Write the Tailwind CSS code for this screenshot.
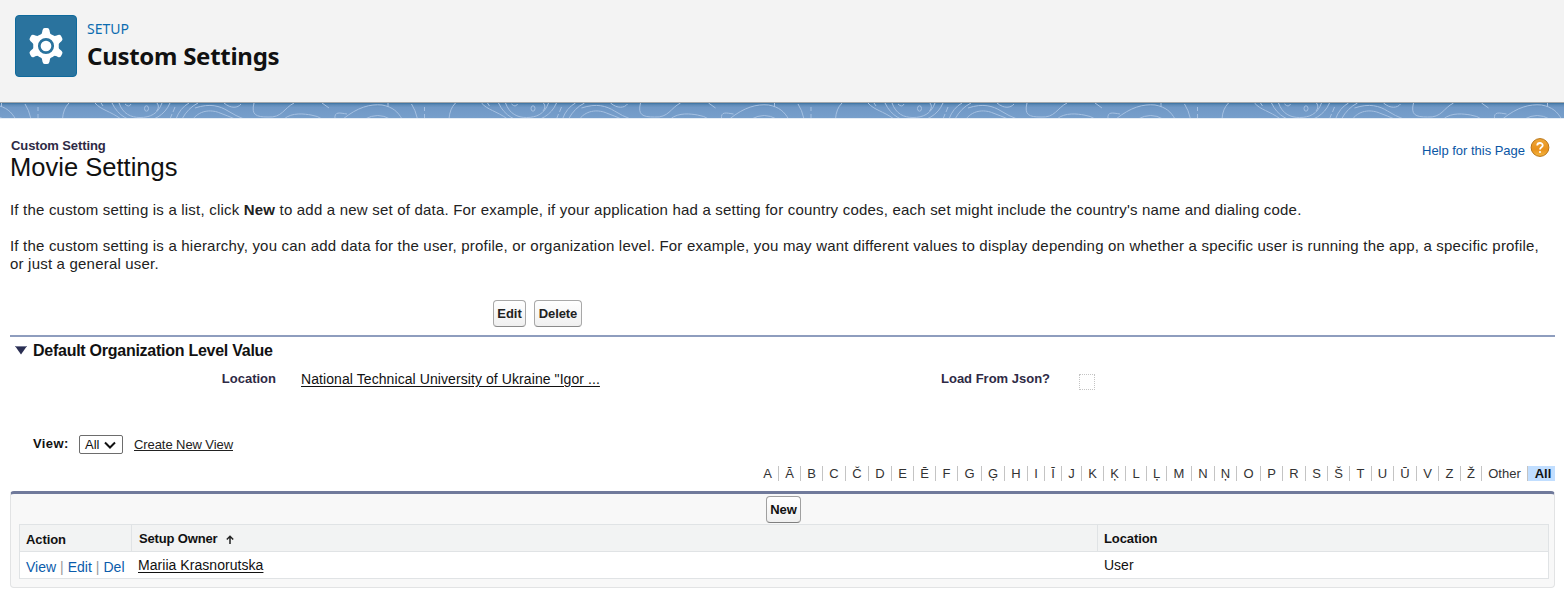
<!DOCTYPE html>
<html lang="en">
<head>
<meta charset="utf-8">
<title>Custom Settings</title>
<script src="https://cdn.jsdelivr.net/npm/@tailwindcss/browser@4"></script>
</head>
<body class="h-[594px] overflow-hidden bg-white font-['Liberation_Sans',Arial,sans-serif] text-[#111]">
<header class="flex h-[103px] items-start gap-[10px] border-b border-[#a3a7ab] bg-[#f3f3f3] pt-[15px] pl-[15px] font-['Noto_Sans',sans-serif]">
  <div class="flex size-[62px] items-center justify-center rounded-[4px] border border-[#0f6a9c] bg-[#2a739e]">
    <svg class="size-[38px]" viewBox="-19 -19 38 38"><g fill="#fff"><circle r="12.800"/><path id="tooth" d="M-5.400-10.500C-4-12.500-3.900-13.500-3.500-15.800Q-3-18 -1.300-18H1.300Q3-18 3.500-15.800C3.900-13.500 4-12.500 5.400-10.500Z"/><use href="#tooth" transform="rotate(60)"/><use href="#tooth" transform="rotate(120)"/><use href="#tooth" transform="rotate(180)"/><use href="#tooth" transform="rotate(240)"/><use href="#tooth" transform="rotate(300)"/></g><circle r="6.700" fill="none" stroke="#2a739e" stroke-width="2.700"/></svg>
  </div>
  <div class="pt-[4px]">
    <div class="text-[14px] leading-[20px] text-[#0b6cb0]">SETUP</div>
    <h1 class="text-[24px] leading-[34px] font-bold tracking-[-0.28px] text-[#111]">Custom Settings</h1>
  </div>
</header>
<svg class="block h-[16px] w-full" viewBox="0 0 1564 16">
  <defs>
    <linearGradient id="shade" x1="0" y1="0" x2="0" y2="1"><stop offset="0" stop-color="#39719f"/><stop offset=".12" stop-color="#5f8bb8"/><stop offset=".3" stop-color="#7098c6"/><stop offset="1" stop-color="#779fcb"/></linearGradient>
    <g id="topo" fill="none" stroke="#a6c1e2" stroke-width="1">
      <path d="M25 1Q29 7 31 16M38 4V8M38 11V15M62.500 16C63 9 65 4 69 0M95 0C101 7 110 8 121 16M101 0L103 3M112 0C118 13 130 19 140 18C153 19 165 12 170 0M119 0C123 11 131 14.500 140 14.500C150 14.500 158 11 162 0M125 1Q129 5 131 1M157 0Q160 4 156.500 8M175 4L173 9M172 11L170 16M176 16Q180 5 189 0M182 16Q188 5 198 0M193 16C201 6 213 7 220 10Q228 13 235 16M195 5C210 0 220 3 228 8Q236 13 244 16M224 0C231 6 238 5 241 1M254 0C251 12 256 14 268 14C282 15 284 5 294 0M284 16C292 9 305 11 311 12Q318 13 322 16M322 0L329 5M335 16C334 8 340 10 347 11M343 16C358 4 370 1 382 2C393 4 398 9 402 16M365 16Q378 9 390 16M388 0V4"/>
      <ellipse cx="146.500" cy="5.500" rx="2" ry="2.700"/>
    </g>
  </defs>
  <rect width="1564" height="15" fill="url(#shade)"/>
  <use href="#topo" x="-386.500"/><use href="#topo"/><use href="#topo" x="386.500"/><use href="#topo" x="773"/><use href="#topo" x="1159.500"/>
  <rect y="15" width="1564" height="1" fill="#e4ecf5"/>
</svg>

<main class="pr-[9px] pl-[10px]">
  <div class="flex h-[82px] justify-between pt-[19px]">
    <div>
      <p class="pl-px text-[13px] leading-[16px] font-bold tracking-[-0.1px] text-[#2e2a45]">Custom Setting</p>
      <h2 class="text-[25.5px] leading-[27px] tracking-[0.020px]">Movie Settings</h2>
    </div>
    <a class="flex h-[20px] items-start gap-[5px] pr-[5px] text-[13px] leading-[25px] tracking-[-0.020px] text-[#0a56a5]">Help for this Page
      <svg class="h-[20px] w-[20px]" viewBox="0 0 20 20"><defs><linearGradient id="amber" x1="0" y1="0" x2="0" y2="1"><stop offset="0" stop-color="#efa83a"/><stop offset=".6" stop-color="#e8911b"/><stop offset="1" stop-color="#f5b640"/></linearGradient></defs><circle cx="10" cy="9.500" r="8.900" fill="url(#amber)" stroke="#b87518" stroke-width="1"/><path d="M7.200 7.500C7.300 4.200 12.700 4.200 12.700 7.400C12.700 9.300 10 9.300 10 11.500" fill="none" stroke="#fff" stroke-width="1.800"/><circle cx="10" cy="14" r="1.100" fill="#fff"/></svg>
    </a>
  </div>
  <div class="text-[15px] leading-[18px] tracking-[0.2px] whitespace-nowrap text-[#222]">
    <p>If the custom setting is a list, click <b>New</b> to add a new set of data. For example, if your application had a setting for country codes, each set might include the country's name and dialing code.</p>
    <p class="pt-[18px]">If the custom setting is a hierarchy, you can add data for the user, profile, or organization level. For example, you may want different values to display depending on whether a specific user is running the app, a specific profile,<br>or just a general user.</p>
  </div>

  <div class="flex gap-2 pt-[27px] pb-2 pl-[483px] text-[13px] font-bold text-[#222]">
    <button class="h-[27px] w-[33px] rounded-[4px] border border-[#a8a8a8] border-b-[#8a8a8a] bg-linear-to-b from-white to-[#f0f0f0]">Edit</button>
    <button class="h-[27px] w-[48px] rounded-[4px] border border-[#a8a8a8] border-b-[#8a8a8a] bg-linear-to-b from-white to-[#f0f0f0] tracking-[-0.1px]">Delete</button>
  </div>

  <section class="h-[100px] border-t-2 border-[#8e9dbe]">
    <h3 class="flex items-start gap-[6px] pt-[4px] pl-[5px] text-[16px] leading-[20px] font-bold tracking-[-0.26px]">
      <svg class="mt-[5px] h-[9px] w-[12px]" viewBox="0 0 12 9"><path d="M0 0H12L6 8.500Z" fill="#2a2e52"/><path d="M0 .5H12" stroke="#777b95"/></svg>Default Organization Level Value</h3>
    <div class="flex pt-[8px] leading-[20px]">
      <span class="w-[266px] shrink-0 text-right text-[13px] font-bold text-[#2e2a45]">Location</span>
      <a class="ml-[25px] w-[640px] shrink-0 text-[14px] tracking-[0.080px] underline underline-offset-2">National Technical University of Ukraine "Igor ...</a>
      <span class="w-[138px] shrink-0 text-[13px] font-bold text-[#2e2a45]">Load From Json?</span>
      <span class="mt-[5px] h-[16px] w-[16px] border border-dotted border-[#c4c4c4]"></span>
    </div>
  </section>

  <div class="flex h-[19px] pl-[22px] text-[13px] leading-[17px]">
    <b class="w-[47px] pl-px tracking-[0.4px]">View:</b>
    <span class="flex h-[19px] w-[44px] items-center gap-[5px] rounded-[2px] border border-[#6d6d6d] pl-[5px]">All
      <svg class="h-[8px] w-[12px]" viewBox="0 0 12 8"><path d="M1 1.500L6 6.500L11 1.500" fill="none" stroke="#111" stroke-width="2"/></svg></span>
    <a class="ml-[11px] pt-px tracking-[-0.080px] text-[#222] underline underline-offset-1">Create New View</a>
  </div>

  <nav class="mt-[12px] flex h-[15px] justify-end text-center text-[13px] leading-[15px] text-[#333] *:shrink-0 *:border-r *:border-[#c4c4c4]">
    <a class="w-[22px]">A</a><a class="w-[22px]">Ā</a><a class="w-[22px]">B</a><a class="w-[23px]">C</a><a class="w-[23px]">Č</a><a class="w-[23px]">D</a><a class="w-[22px]">E</a><a class="w-[22px]">Ē</a><a class="w-[22px]">F</a><a class="w-[24px]">G</a><a class="w-[23px]">Ģ</a><a class="w-[23px]">H</a><a class="w-[17px]">I</a><a class="w-[17px]">Ī</a><a class="w-[20px]">J</a><a class="w-[22px]">K</a><a class="w-[22px]">Ķ</a><a class="w-[21px]">L</a><a class="w-[20px]">Ļ</a><a class="w-[25px]">M</a><a class="w-[23px]">N</a><a class="w-[22px]">Ņ</a><a class="w-[24px]">O</a><a class="w-[22px]">P</a><a class="w-[23px]">R</a><a class="w-[22px]">S</a><a class="w-[22px]">Š</a><a class="w-[22px]">T</a><a class="w-[22px]">U</a><a class="w-[23px]">Ū</a><a class="w-[22px]">V</a><a class="w-[22px]">Z</a><a class="w-[21px]">Ž</a><a class="w-[46px]">Other</a><b class="w-[27px] border-none bg-[#c1deff] pl-[3px] text-[#111]">All</b>
  </nav>

  <section class="mt-[10px] h-[97px] overflow-hidden rounded-[4px] border border-t-[3px] border-[#e2e3e4] border-t-[#707a9b] bg-[#f8f8f8] px-2">
    <div class="pt-[2px] pl-[747px]"><button class="block h-[27px] w-[35px] rounded-[4px] border border-[#a0a0a0] border-b-[#7f7f7f] bg-linear-to-b from-white to-[#f0f0f0] text-[13px] font-bold">New</button></div>
    <div class="mt-px mr-[-3px] w-[1530px] border border-[#e0e3e5] text-[13px]">
      <div class="flex h-[27px] border-b border-[#e0e3e5] bg-[#f2f3f3] leading-[26px] font-bold">
        <div class="w-[112px] border-r border-[#e0e3e5] pt-[2px] pl-[6px] tracking-[-0.1px]">Action</div>
        <div class="flex w-[966px] items-center gap-[8px] border-r border-[#e0e3e5] pt-[2px] pl-[7px] tracking-[-0.150px]">Setup Owner<svg class="h-[9px] w-[8px]" viewBox="0 0 8 9"><path d="M4 9V1.500M.8 4.500L4 1.300L7.200 4.500" fill="none" stroke="#222" stroke-width="1.500"/></svg></div>
        <div class="pt-px pl-[6px] tracking-[-0.1px]">Location</div>
      </div>
      <div class="flex h-[26px] bg-white text-[14px] leading-[26px]">
        <div class="flex w-[112px] gap-[4px] pt-[2px] pl-[6px] text-[#0b5cab]"><a>View</a><span class="text-[#999]">|</span><a>Edit</a><span class="text-[#999]">|</span><a>Del</a></div>
        <div class="w-[966px] pl-[6px]"><a class="tracking-[0.050px] underline underline-offset-2">Mariia Krasnorutska</a></div>
        <div class="pl-[6px]">User</div>
      </div>
    </div>
  </section>
</main>
</body>
</html>
